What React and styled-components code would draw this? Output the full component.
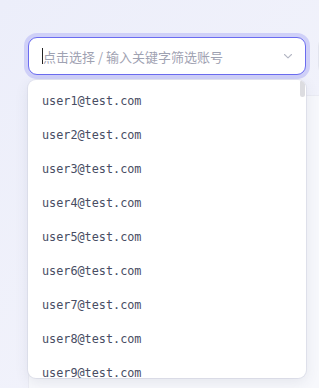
import React from "react";
import styled, { createGlobalStyle } from "styled-components";

const Global = createGlobalStyle`
  html, body { margin: 0; padding: 0; }
  body {
    width: 319px;
    height: 388px;
    overflow: hidden;
    background: linear-gradient(135deg, #eceefa 0%, #f1f2fb 60%, #f3f4fb 100%);
    font-family: "Noto Sans", "Noto Sans CJK SC", sans-serif;
  }
`;

const Page = styled.div`
  padding: 37px 0 0 28px;
  display: flex;
  flex-direction: column;
  gap: 20px;
  width: 291px;
  overflow: hidden;
`;

const Toolbar = styled.div`
  display: flex;
  gap: 12px;
  align-items: center;
`;

const SelectWrap = styled.div`
  position: relative;
  width: 278px;
  flex: none;
`;

const SelectBox = styled.div`
  box-sizing: border-box;
  height: 38px;
  border: 1px solid #6b6cf0;
  border-radius: 9px;
  background: #fff;
  box-shadow: 0 0 0 4px #cfd0f8;
  display: flex;
  align-items: center;
  padding: 0 12px 0 13px;
`;

const Caret = styled.span`
  display: inline-block;
  width: 1px;
  height: 16px;
  background: #222;
  flex: none;
`;

const Placeholder = styled.span`
  flex: 1;
  font-size: 13px;
  color: #9fa2b2;
  font-family: "Noto Sans CJK SC", "Noto Sans", sans-serif;
  white-space: nowrap;
`;

const Chevron = styled.svg`
  flex: none;
  width: 10px;
  height: 10px;
`;

const OtherBox = styled.div`
  box-sizing: border-box;
  width: 100px;
  height: 38px;
  border: 1px solid #e2e4ee;
  border-radius: 9px;
  background: #fff;
  flex: none;
`;

const Panel = styled.div`
  box-sizing: border-box;
  height: 300px;
  background: #f7f8fc;
  border: 1px solid #eaebf3;
  border-right: none;
  border-radius: 10px 0 0 0;
`;

const Dropdown = styled.div`
  position: absolute;
  top: 43px;
  left: 0;
  width: 278px;
  box-sizing: border-box;
  height: 298px;
  background: #fff;
  border-radius: 8px;
  box-shadow: 0 4px 14px rgba(60, 64, 100, 0.1), 0 0 0 1px rgba(220, 222, 235, 0.6);
  overflow: hidden;
  z-index: 10;
`;

const List = styled.ul`
  margin: 0;
  padding: 4px 0;
  list-style: none;
`;

const ScrollThumb = styled.div`
  position: absolute;
  top: 0;
  right: 1px;
  width: 5px;
  height: 17px;
  border-radius: 3px;
  background: #dcdce0;
`;

const Item = styled.li`
  height: 34px;
  display: flex;
  align-items: center;
  padding-left: 14px;
  font-family: "DejaVu Sans Mono", monospace;
  font-size: 11.8px;
  color: #484d63;
`;

const users = Array.from({ length: 9 }, (_, i) => `user${i + 1}@test.com`);

export default function App() {
  return (
    <>
      <Global />
      <Page>
        <Toolbar>
          <SelectWrap>
            <SelectBox>
              <Caret />
              <Placeholder>点击选择 / 输入关键字筛选账号</Placeholder>
              <Chevron viewBox="0 0 10 10">
                <path d="M1.5 3.5 L5 6.8 L8.5 3.5" fill="none" stroke="#b4b7c4" strokeWidth="1.1" strokeLinecap="round" strokeLinejoin="round" />
              </Chevron>
            </SelectBox>
            <Dropdown>
              <List>
                {users.map((u) => (
                  <Item key={u}>{u}</Item>
                ))}
              </List>
              <ScrollThumb />
            </Dropdown>
          </SelectWrap>
          <OtherBox />
        </Toolbar>
        <Panel />
      </Page>
    </>
  );
}
